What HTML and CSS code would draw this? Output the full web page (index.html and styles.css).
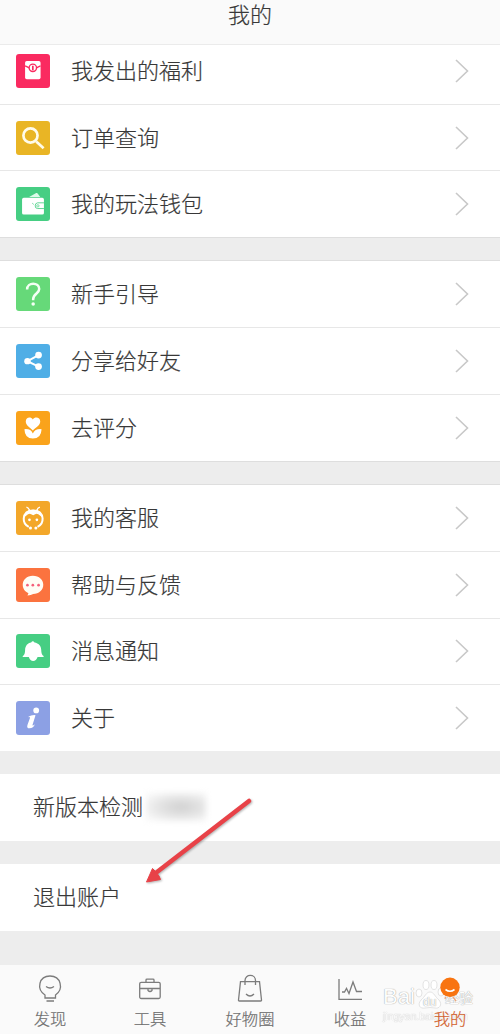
FILE: index.html
```html
<!DOCTYPE html>
<html lang="zh-CN">
<head>
<meta charset="utf-8">
<title>我的</title>
<link rel="stylesheet" href="styles.css">
</head>
<body>
<div class="app">
  <header class="header">我的</header>
  <main class="content">
    <section class="group group-first">
      <div class="row">
        <svg class="icon red" viewBox="0 0 101 101"><rect x="27" y="21" width="46" height="54" rx="5" fill="#fff"/><path d="M27 35Q34 38 39 41M73 35Q66 38 61 41" stroke="#fa2a60" stroke-width="4" fill="none"/><circle cx="50" cy="41" r="11" fill="#fff" stroke="#fa2a60" stroke-width="4"/><path d="M50 35V48" stroke="#fa2a60" stroke-width="5"/></svg>
        <span class="label">我发出的福利</span>
        <svg class="chevron" viewBox="0 0 14 24"><path d="M1 1L12.5 12L1 23"/></svg>
      </div>
      <div class="row">
        <svg class="icon gold" viewBox="0 0 101 101"><g fill="none" stroke="#fffbe9"><circle cx="43" cy="43" r="21" stroke-width="8"/><path d="M60 61L82 81" stroke-width="8"/></g></svg>
        <span class="label">订单查询</span>
        <svg class="chevron" viewBox="0 0 14 24"><path d="M1 1L12.5 12L1 23"/></svg>
      </div>
      <div class="row">
        <svg class="icon green" viewBox="0 0 101 101"><path d="M39 30L60 18Q63 17 65 20L72 30Z" fill="#dcfbe9"/><rect x="18" y="32" width="65" height="50" rx="5" fill="#fff"/><path d="M83 47H64Q57 48 57 56T64 64H83" fill="none" stroke="#46ce83" stroke-width="2.5"/><circle cx="65" cy="56" r="3.5" fill="none" stroke="#46ce83" stroke-width="2"/><path d="M48 48L53 52" stroke="#46ce83" stroke-width="2"/></svg>
        <span class="label">我的玩法钱包</span>
        <svg class="chevron" viewBox="0 0 14 24"><path d="M1 1L12.5 12L1 23"/></svg>
      </div>
    </section>
    <section class="group">
      <div class="row">
        <svg class="icon lime" viewBox="0 0 101 101"><path d="M33 37C33 14 69 15 69 36C69 49 51 49 51 66V69" fill="none" stroke="#f4fff5" stroke-width="7.5"/><circle cx="51" cy="80" r="5.2" fill="#f4fff5"/></svg>
        <span class="label">新手引导</span>
        <svg class="chevron" viewBox="0 0 14 24"><path d="M1 1L12.5 12L1 23"/></svg>
      </div>
      <div class="row">
        <svg class="icon blue" viewBox="0 0 101 101"><path d="M67 33L34 51L67 67" fill="none" stroke="#fff" stroke-width="6"/><g fill="#fff"><circle cx="67" cy="33" r="10"/><circle cx="34" cy="51" r="9.5"/><circle cx="67" cy="67" r="10"/></g></svg>
        <span class="label">分享给好友</span>
        <svg class="chevron" viewBox="0 0 14 24"><path d="M1 1L12.5 12L1 23"/></svg>
      </div>
      <div class="row">
        <svg class="icon orange" viewBox="0 0 101 101"><g fill="#fff"><path d="M50 58C43 50 29 43 29 31C29 18 44 16 50 25C56 16 72 18 72 31C72 43 57 50 50 58Z"/><path d="M25 54Q44 52 50 67Q57 52 76 54Q75 82 50 82Q26 82 25 54Z"/></g></svg>
        <span class="label">去评分</span>
        <svg class="chevron" viewBox="0 0 14 24"><path d="M1 1L12.5 12L1 23"/></svg>
      </div>
    </section>
    <section class="group group-last">
      <div class="row">
        <svg class="icon amber" viewBox="0 0 101 101"><g fill="none" stroke="#fff"><path d="M40 28Q38 20 31 18M62 28Q64 20 71 18" stroke-width="4"/><path d="M38 77Q22 69 23 52Q25 28 51 28Q77 28 79 52Q80 69 64 77" stroke-width="6"/></g><path d="M23 50Q25 26 51 26Q77 26 79 50L72 44Q64 36 57 39L51 42L45 39Q38 36 30 44Z" fill="#fff"/><g fill="#fff"><circle cx="40" cy="56" r="4"/><circle cx="62" cy="56" r="4"/><circle cx="43" cy="80" r="4.500"/><circle cx="59" cy="80" r="4.500"/></g></svg>
        <span class="label">我的客服</span>
        <svg class="chevron" viewBox="0 0 14 24"><path d="M1 1L12.5 12L1 23"/></svg>
      </div>
      <div class="row">
        <svg class="icon coral" viewBox="0 0 101 101"><path d="M50 23C69 23 81 35 81 50C81 66 68 77 51 77Q45 80 34 82L37 75C27 71 20 62 20 50C20 35 32 23 50 23Z" fill="#fffdf5"/><g fill="#f5607a"><circle cx="34" cy="51" r="4"/><circle cx="50" cy="51" r="4"/><circle cx="67" cy="51" r="4"/></g></svg>
        <span class="label">帮助与反馈</span>
        <svg class="chevron" viewBox="0 0 14 24"><path d="M1 1L12.5 12L1 23"/></svg>
      </div>
      <div class="row">
        <svg class="icon green" viewBox="0 0 101 101"><g fill="#fff"><path d="M20 68V65Q27 62 27 48C27 34 35 27 45 25Q50 18 55 25C67 27 75 35 75 48Q75 62 82 65V68Z"/><path d="M38 68H64Q60 80 51 80T38 68Z"/></g></svg>
        <span class="label">消息通知</span>
        <svg class="chevron" viewBox="0 0 14 24"><path d="M1 1L12.5 12L1 23"/></svg>
      </div>
      <div class="row">
        <svg class="icon violet" viewBox="0 0 101 101"><g fill="#fff"><circle cx="60" cy="28" r="8.500"/><path d="M37 47Q45 41 58 42L49 71Q49 75 56 69Q52 81 40 81Q31 81 34 71L42 49Q41 47 37 48Z"/></g></svg>
        <span class="label">关于</span>
        <svg class="chevron" viewBox="0 0 14 24"><path d="M1 1L12.5 12L1 23"/></svg>
      </div>
    </section>
    <div class="plain"><span class="plain-text">新版本检测</span><span class="smudge"></span></div>
    <div class="plain"><span class="plain-text">退出账户</span></div>
  </main>
  <nav class="tabs">
    <div class="tab">
      <svg class="tab-icon" viewBox="0 0 32 32"><path d="M11 25V22C2 16 5 3 16 3S30 16 21.500 22V25ZM12.500 28H20M12 13.500Q16 16.500 20 13.500"/></svg>
      <span>发现</span>
    </div>
    <div class="tab">
      <svg class="tab-icon" viewBox="0 0 32 32"><rect x="5.700" y="9.300" width="20.500" height="16.200" rx="1.500"/><path d="M12 9V7Q12 6.200 13 6.200H19Q20 6.200 20 7V9M6 15.500H26M14 16V17.500Q16 19.500 18 17.500V16"/></svg>
      <span>工具</span>
    </div>
    <div class="tab">
      <svg class="tab-icon" viewBox="0 0 32 32"><path d="M6.500 8.700H25.500L27.500 27Q27.600 28 26.600 28H5.400Q4.400 28 4.500 27ZM11 12V7.500C11 0.700 21.500 0.700 21.500 7.500V12M12 21Q16 25 20 21"/></svg>
      <span>好物圈</span>
    </div>
    <div class="tab">
      <svg class="tab-icon" viewBox="0 0 32 32"><path d="M5 6V26.300H28M8 19H10.500L12.500 15.500L15 20.500L19 9L22.500 18.500H28"/></svg>
      <span>收益</span>
    </div>
    <div class="tab tab-active">
      <svg class="tab-icon" viewBox="0 0 32 32"><circle class="head" cx="16" cy="14.300" r="9.700"/><path class="smile" d="M11.500 16.500Q16 20 20.500 16.500"/><path class="body" d="M11 26L11.500 24M19 24L22 28"/></svg>
      <span>我的</span>
    </div>
  </nav>
  <svg class="arrow" viewBox="0 0 116 94"><path class="shaft" d="M105 7L13 78"/><path class="tip" d="M2.500 88L8.500 74.500L11.500 77.500L15 82L16.500 85.500Z"/></svg>
  <div class="watermark">
    <div class="mark-main"><span class="mark-bai">Bai</span><span class="mark-paw"><svg class="paw" viewBox="0 0 30 30"><ellipse cx="4" cy="13" rx="3" ry="4"/><ellipse cx="11" cy="5" rx="3" ry="4.500"/><ellipse cx="19" cy="5" rx="3" ry="4.500"/><ellipse cx="26" cy="12" rx="3" ry="4"/><path d="M15 12C19 12 20 17 24 20C28 25 24 29 20 28Q15 27 10 28C5 29 2 25 6 20C10 17 11 12 15 12Z"/></svg><span class="mark-du">du</span></span><span class="mark-cn">经验</span></div>
    <div class="mark-url">jingyan.baidu.com</div>
  </div>
</div>
</body>
</html>
```
FILE: styles.css
```css
* { box-sizing: border-box; }
body { margin: 0; }
.app {
  position: relative;
  display: flex;
  flex-direction: column;
  width: 500px;
  height: 1034px;
  overflow: hidden;
  background: #ededed;
  color: #383838;
  font-family: "Noto Sans CJK SC", sans-serif;
  font-weight: 300;
  -webkit-text-stroke: .2px currentColor;
}
.header {
  z-index: 1;
  flex: none;
  height: 45px;
  border-bottom: 1px solid #ebebeb;
  background: #fafafa;
  font-size: 22px;
  line-height: 26px;
  text-align: center;
}
.content { flex: 1; }
.group {
  margin-bottom: 22.500px;
  border-top: 1px solid #dedede;
  border-bottom: 1px solid #dedede;
  background: #fff;
}
.group-first { margin-top: -8px; }
.group-first .row:last-child { height: 65.500px; }
.group-last { border-bottom: 0; }
.row {
  display: flex;
  align-items: center;
  height: 66.700px;
  padding: 0 31px 0 16px;
  border-bottom: 1px solid #e7e7e7;
}
.row:last-child { border-bottom: 0; height: 66px; }
.group-last .row:last-child { margin-bottom: .500px; }
.icon { width: 34px; height: 34px; border-radius: 3px; }
.label { flex: 1; margin-left: 21px; padding-bottom: 4px; font-size: 22px; line-height: 32px; }
.chevron { width: 14px; height: 24px; fill: none; stroke: #c8c8c8; stroke-width: 1.600; }
.red { background: #fa2a60; }
.gold { background: #e9b525; }
.green { background: #46ce83; }
.lime { background: #66d979; }
.blue { background: #4faee6; }
.orange { background: #faa31b; }
.amber { background: #f3a72a; }
.coral { background: #fb733f; }
.violet { background: #8ca0e4; }
.plain {
  display: flex;
  align-items: center;
  height: 67px;
  margin-bottom: 23px;
  padding-left: 33px;
  background: #fff;
  font-size: 22px;
}
.plain-text { padding-bottom: 4px; }
.smudge {
  width: 60px;
  height: 28px;
  margin-left: 3px;
  background: radial-gradient(ellipse at 58% 50%, #d0d0d0 0, #e4e4e4 45%, #f8f8f8 85%);
  filter: blur(3px);
}
.tabs {
  display: grid;
  grid-template-columns: repeat(5, 1fr);
  flex: none;
  height: 69px;
  background: #fafafa;
}
.tab {
  display: flex;
  flex-direction: column;
  align-items: center;
  padding-top: 8px;
  color: #6e6e6e;
  font-size: 16.300px;
  line-height: 24px;
}
.tab span { margin-top: 1px; }
.tab-icon { width: 32px; height: 32px; fill: none; stroke: #7c7c7c; stroke-width: 1.300; }
.tab-active { color: #d2602c; }
.tab-active .tab-icon, .tab-active span { position: relative; z-index: 2; }
.head { fill: #f87410; stroke: none; }
.smile { stroke: #fff; stroke-width: 1.600; }
.body { stroke: #eba77e; }
.arrow {
  position: absolute;
  left: 144px;
  top: 794px;
  width: 116px;
  height: 94px;
  filter: drop-shadow(1px 1px 1px rgba(0, 0, 0, .3));
}
.shaft { stroke: #e84248; stroke-width: 4.500; stroke-linecap: round; }
.tip { fill: #e84248; stroke: #e84248; stroke-linejoin: round; }
.watermark {
  position: absolute;
  left: 383px;
  top: 980px;
  width: 92px;
  color: #fdfdfd;
  font-family: "Liberation Sans", "Noto Sans CJK SC", sans-serif;
  font-weight: 400;
  -webkit-text-stroke: 0;
  text-shadow: 0 0 1px #999, 0 0 1px #ccc;
}
.mark-main { display: flex; align-items: flex-end; height: 30px; }
.mark-bai { width: 32px; font-size: 22px; line-height: 26px; }
.mark-paw { position: relative; width: 30px; height: 30px; }
.paw { display: block; width: 30px; height: 30px; fill: #fff; stroke: #dcdcdc; stroke-width: .800; }
.mark-du { position: absolute; left: 8px; top: 15px; font-size: 12px; line-height: 14px; }
.mark-cn { font-family: "Noto Sans CJK SC", sans-serif; font-size: 14px; line-height: 26px; }
.mark-url { font-size: 10.500px; line-height: 12px; opacity: .6; }
```
